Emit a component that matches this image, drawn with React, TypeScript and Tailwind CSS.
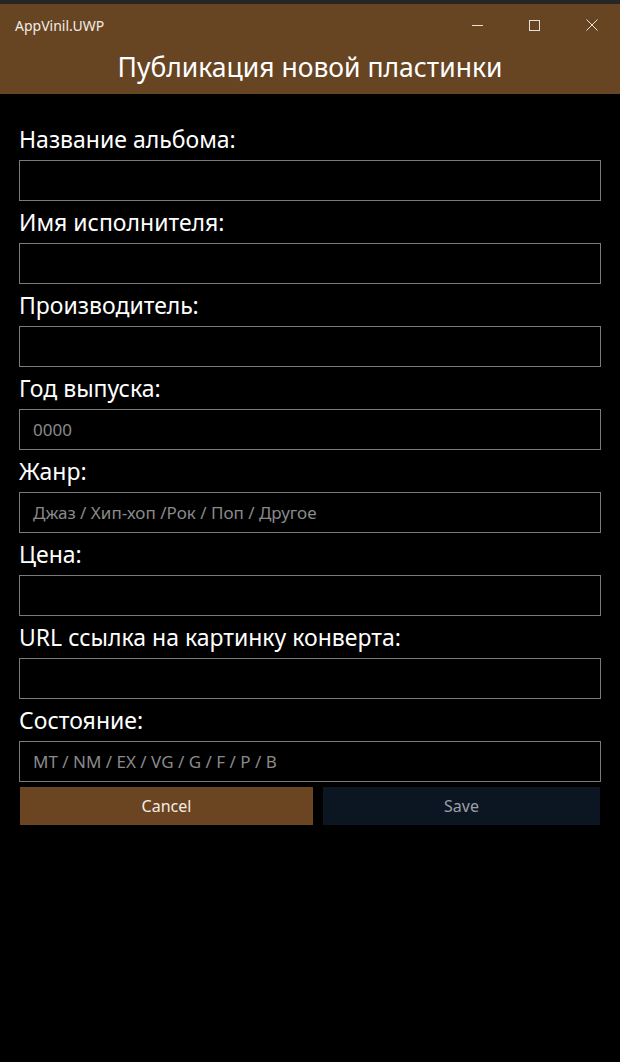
import React from "react";

const fields: { label: string; placeholder?: string }[] = [
  { label: "Название альбома:" },
  { label: "Имя исполнителя:" },
  { label: "Производитель:" },
  { label: "Год выпуска:", placeholder: "0000" },
  { label: "Жанр:", placeholder: "Джаз / Хип-хоп /Рок / Поп / Другое" },
  { label: "Цена:" },
  { label: "URL ссылка на картинку конверта:" },
  { label: "Состояние:", placeholder: "MT / NM / EX / VG / G / F / P / B" },
];

export default function App() {
  return (
    <div
      className="w-[620px] h-[1062px] bg-black text-white flex flex-col"
      style={{ fontFamily: '"Noto Sans", "Open Sans", sans-serif' }}
    >
      <div className="h-[4px] bg-[#262626]" />
      <div className="bg-[#674523] h-[90px] flex flex-col">
        <div className="h-[42px] flex items-center">
          <span className="pl-[15px] text-[14px] text-[#f2ece4] flex-1">AppVinil.UWP</span>
          <div className="flex items-center h-full">
            <div className="w-[57px] h-full flex items-center justify-center">
              <div className="w-[11px] h-[1px] bg-[#e8e0d6]" />
            </div>
            <div className="w-[57px] h-full flex items-center justify-center">
              <div className="w-[11px] h-[11px] border border-[#e8e0d6]" />
            </div>
            <div className="w-[57px] h-full flex items-center justify-center">
              <svg width="12" height="12" viewBox="0 0 12 12">
                <path d="M0.5 0.5 L11.5 11.5 M11.5 0.5 L0.5 11.5" stroke="#e8e0d6" strokeWidth="1" />
              </svg>
            </div>
          </div>
        </div>
        <div className="flex-1 flex items-start justify-center pt-[4px]">
          <span className="text-[26.5px] leading-[34px] text-white">Публикация новой пластинки</span>
        </div>
      </div>
      <div className="flex flex-col px-[19px] pt-[24px]">
        {fields.map((f) => (
          <div key={f.label} className="flex flex-col">
            <div className="h-[42px] flex items-center text-[23px] leading-[30px] text-white">{f.label}</div>
            <div className="h-[41px] border border-[#7a7a7a] flex items-center pl-[13px] text-[17px] text-[#8a8a8a]">
              {f.placeholder ?? ""}
            </div>
          </div>
        ))}
        <div className="flex gap-[10px] mt-[5px] pl-[1px] pr-[1px]">
          <div className="w-[293px] h-[38px] bg-[#6b4522] flex items-center justify-center text-[16px] text-[#f4ece2]">
            Cancel
          </div>
          <div className="flex-1 h-[38px] bg-[#0b1622] flex items-center justify-center text-[16px] text-[#9aa0a8]">
            Save
          </div>
        </div>
      </div>
    </div>
  );
}
